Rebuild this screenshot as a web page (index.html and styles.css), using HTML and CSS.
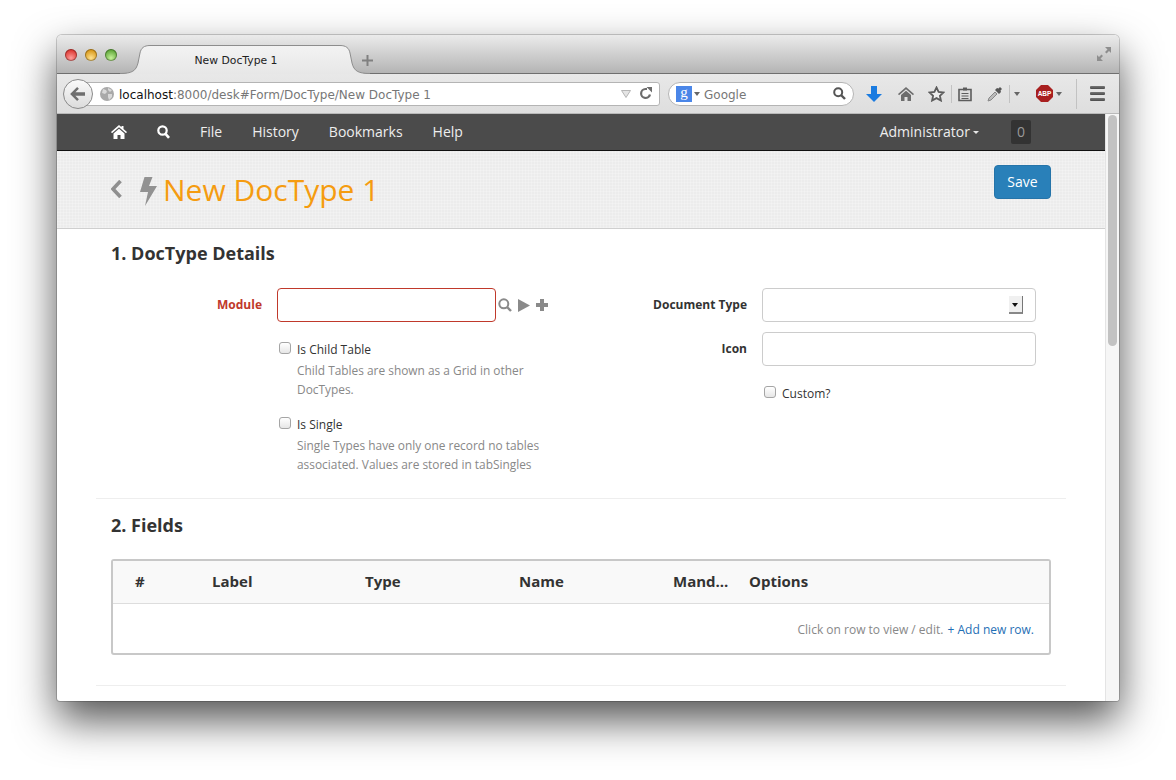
FILE: index.html
```html
<!DOCTYPE html>
<html lang="en">

<head>
    <meta charset="UTF-8">
    <title>New DocType 1</title>
    <link rel="stylesheet" href="styles.css">
</head>

<body>
    <div class="window">
        <div class="titlebar">
            <div class="lights">
                <span class="light red"></span>
                <span class="light amber"></span>
                <span class="light green"></span>
            </div>
            <div class="tab">
                <svg class="tab-shape" width="250" height="29" viewBox="0 0 250 29">
                    <defs>
                        <linearGradient id="tabfill" x1="0" y1="0" x2="0" y2="1">
                            <stop offset="0" stop-color="#f3f3f3" />
                            <stop offset="1" stop-color="#e7e7e7" />
                        </linearGradient>
                    </defs>
                    <path d="M0 28.500C12 28.500 16 26 18 18L20 8C21 3 24 .5 30 .5H220C226 .5 229 3 230 8L232 18C234 26 238 28.500 250 28.500V29H0Z" fill="url(#tabfill)" />
                    <path d="M0 28.500C12 28.500 16 26 18 18L20 8C21 3 24 .5 30 .5H220C226 .5 229 3 230 8L232 18C234 26 238 28.500 250 28.500" fill="none" stroke="#8d8d8d" />
                </svg>
                <span class="tab-title">New DocType 1</span>
            </div>
            <svg class="new-tab" width="11" height="11" viewBox="0 0 11 11">
                <path d="M4.500 0h2v4.500H11v2H6.500V11h-2V6.500H0v-2h4.500z" fill="#808080" />
            </svg>
            <svg class="fullscreen" width="16" height="16" viewBox="0 0 16 16">
                <path d="M9 1h6v6l-2-2-2.500 2.500-1.500-1.500L11.500 3.500zM7 15H1V9l2 2 2.500-2.500L7 10 4.500 12.500z" fill="#8e8e8e" />
            </svg>
        </div>

        <div class="toolbar">
            <div class="back-btn">
                <svg width="16" height="14" viewBox="0 0 18 16">
                    <path d="M8 0l2 2-4 4h11v4H6l4 4-2 2-8-8z" fill="#6e6e6e" />
                </svg>
            </div>
            <div class="urlbar">
                <svg class="globe" width="14" height="14" viewBox="0 0 14 14">
                    <circle cx="7" cy="7" r="7" fill="#a9a9a9" />
                    <path d="M3 2l3 1 1 2-2 2-3-1zM8 7l4 0 0 3-3 3-1-3zM8 1l4 2-2 2-2-2z" fill="#d9d9d9" />
                </svg>
                <span class="url"><b class="host">localhost</b>:8000/desk#Form/DocType/New DocType 1</span>
                <svg width="10" height="8" viewBox="0 0 10 8">
                    <path d="M.5.500h9L5 7.500z" fill="#e4e4e4" stroke="#b5b5b5" />
                </svg>
                <svg class="reload" width="13" height="13" viewBox="0 0 13 13">
                    <path d="M11 7.500A4.500 4.500 0 1 1 6.500 2H8" fill="none" stroke="#6c6c6c" stroke-width="2.200" />
                    <path d="M7.500 0L13 0 13 5.500z" fill="#6c6c6c" />
                </svg>
            </div>
            <div class="searchbar">
                <span class="engine">g</span>
                <span class="caret engine-caret"></span>
                <span class="search-text">Google</span>
                <svg class="search-go" width="13" height="13" viewBox="0 0 13 13">
                    <circle cx="5.200" cy="5.200" r="4" fill="none" stroke="#555" stroke-width="2" />
                    <path d="M8 8l4 4" stroke="#555" stroke-width="2.400" />
                </svg>
            </div>
            <svg class="tool tool-download" width="16" height="16" viewBox="0 0 16 16">
                <path d="M5 0h6v8h5l-8 8-8-8h5z" fill="#1a7be0" />
            </svg>
            <svg class="tool tool-home" width="16" height="16" viewBox="0 0 16 16">
                <path d="M8 1l8 7-1 1.200L8 3.200 1 9.200 0 8z M3 9l5-4.300L13 9v6H9.500v-4h-3v4H3z" fill="#6d6d6d" />
            </svg>
            <svg class="tool tool-star" width="17" height="16" viewBox="0 0 17 16">
                <path d="M8.500 1.500l2.100 4.400 4.900.6-3.600 3.300 1 4.700-4.400-2.400-4.400 2.400 1-4.700L1.500 6.500l4.900-.6z" fill="#eee" stroke="#5c5c5c" stroke-width="1.800" />
            </svg>
            <span class="sep sep-a"></span>
            <svg class="tool tool-clip" width="16" height="16" viewBox="0 0 16 16">
                <path d="M2 3.500h12v11H2z" fill="#ddd" stroke="#5c5c5c" stroke-width="1.600" />
                <path d="M6 1.500h4v3H6zM4.500 7h7v1h-7zM4.500 9.500h7v1h-7zM4.500 12h7v1h-7z" fill="#5c5c5c" />
            </svg>
            <svg class="tool tool-drop" width="16" height="16" viewBox="0 0 16 16">
                <path d="M1 15l1-3 6-6 2 2-6 6z" fill="#bbb" stroke="#888" />
                <path d="M8 4l2-2 1.500.5L13 1l2 2-1.500 1.500L14 6l-2 2z" fill="#555" />
            </svg>
            <span class="sep sep-b"></span>
            <span class="caret caret-b"></span>
            <svg class="tool tool-abp" width="17" height="17" viewBox="0 0 17 17">
                <path d="M5 0h7l5 5v7l-5 5H5l-5-5V5z" fill="#a81f1f" />
                <text x="8.500" y="11" text-anchor="middle" class="abp-text">ABP</text>
            </svg>
            <span class="caret caret-c"></span>
            <span class="sep sep-c"></span>
            <span class="menu-icon"><i></i><i></i><i></i></span>
        </div>

        <div class="viewport">
            <div class="page">
                <nav class="navbar">
                    <a class="nav-item">
                        <svg class="nav-icon" width="16" height="14" viewBox="0 0 16 14">
                            <path d="M8 0l2.500 2.200V1h2v3L16 7l-1 1.200-7-6-7 6L0 7z M2.500 8.500L8 3.800l5.500 4.700V14h-4v-4h-3v4h-4z" fill="#fff" />
                        </svg>
                    </a>
                    <a class="nav-item">
                        <svg class="nav-icon" width="13" height="14" viewBox="0 0 13 14">
                            <circle cx="5.500" cy="5.500" r="4.200" fill="none" stroke="#fff" stroke-width="2.200" />
                            <path d="M8.500 8.800l3.500 4" stroke="#fff" stroke-width="2.600" />
                        </svg>
                    </a>
                    <a class="nav-item nav-text">File</a>
                    <a class="nav-item nav-text">History</a>
                    <a class="nav-item nav-text">Bookmarks</a>
                    <a class="nav-item nav-text">Help</a>
                    <a class="nav-item nav-text nav-user">Administrator<span class="caret user-caret"></span></a>
                    <span class="nav-badge">0</span>
                </nav>

                <header class="page-head">
                    <svg class="head-back" width="13" height="18" viewBox="0 0 13 18">
                        <path d="M9.500 1L2 9l7.500 8" fill="none" stroke="#8f8f8f" stroke-width="3.600" />
                    </svg>
                    <svg class="head-bolt" width="17" height="29" viewBox="0 0 17 29">
                        <path d="M4.500 0h8L9 9h8L5 29l3-14H0z" fill="#929292" />
                    </svg>
                    <h1 class="page-title">New DocType 1</h1>
                    <button class="btn-save">Save</button>
                </header>

                <section class="section section-details">
                    <h2>1. DocType Details</h2>
                    <div class="columns">
                        <div class="column">
                            <div class="field-row">
                                <label class="field-label required">Module</label>
                                <div class="field-body">
                                    <input class="control control-error" type="text">
                                    <svg class="link-icon link-search" width="14" height="14" viewBox="0 0 14 14">
                                        <circle cx="5.800" cy="5.800" r="4.500" fill="none" stroke="#8a8a8a" stroke-width="2" />
                                        <path d="M9 9l4 4" stroke="#8a8a8a" stroke-width="2.400" />
                                    </svg>
                                    <svg class="link-icon" width="12" height="13" viewBox="0 0 12 13">
                                        <path d="M0 0l12 6.500L0 13z" fill="#8a8a8a" />
                                    </svg>
                                    <svg class="link-icon" width="12" height="12" viewBox="0 0 12 12">
                                        <path d="M4 0h4v4h4v4H8v4H4V8H0V4h4z" fill="#8a8a8a" />
                                    </svg>
                                </div>
                            </div>
                            <div class="check-group check-first">
                                <label class="check"><input type="checkbox">Is Child Table</label>
                                <p class="help">Child Tables are shown as a Grid in other DocTypes.</p>
                            </div>
                            <div class="check-group">
                                <label class="check"><input type="checkbox">Is Single</label>
                                <p class="help">Single Types have only one record no tables associated. Values are stored in tabSingles</p>
                            </div>
                        </div>
                        <div class="column">
                            <div class="field-row">
                                <label class="field-label">Document Type</label>
                                <div class="field-body select-wrap">
                                    <input class="control control-wide" type="text">
                                    <span class="select-arrow"></span>
                                </div>
                            </div>
                            <div class="field-row">
                                <label class="field-label">Icon</label>
                                <div class="field-body">
                                    <input class="control control-wide" type="text">
                                </div>
                            </div>
                            <div class="check-group check-custom">
                                <label class="check"><input type="checkbox">Custom?</label>
                            </div>
                        </div>
                    </div>
                </section>

                <section class="section section-fields">
                    <h2>2. Fields</h2>
                    <div class="grid">
                        <div class="grid-head">
                            <span>#</span>
                            <span>Label</span>
                            <span>Type</span>
                            <span>Name</span>
                            <span>Mand...</span>
                            <span>Options</span>
                        </div>
                        <div class="grid-foot">
                            Click on row to view / edit.
                            <a class="add-row">+ Add new row.</a>
                        </div>
                    </div>
                </section>
            </div>
            <div class="scrollbar">
                <div class="thumb"></div>
            </div>
        </div>
    </div>
</body>

</html>
```

FILE: styles.css
```css
html,
body {
    height: 100%;
}

body {
    margin: 0;
    padding: 35px 57px 0;
    box-sizing: border-box;
    background-color: #fff;
    overflow: hidden;
    font-family: "Open Sans", sans-serif;
    color: #333;
}

.window {
    width: 1062px;
    height: 666px;
    display: flex;
    flex-direction: column;
    border-radius: 5px 5px 3px 3px;
    overflow: hidden;
    background-color: #fff;
    box-shadow: 0 19px 42px rgba(0, 0, 0, 0.68), 0 0 0 1px rgba(70, 70, 70, 0.25);
}

/* title bar */

.titlebar {
    height: 38px;
    flex: none;
    display: flex;
    align-items: flex-end;
    position: relative;
    background: linear-gradient(#ebebeb, #b4b4b4);
    border-bottom: 1px solid #6f6f6f;
}

.lights {
    display: flex;
    gap: 8px;
    position: absolute;
    left: 8px;
    top: 14px;
}

.light {
    width: 12px;
    height: 12px;
    border-radius: 50%;
    box-shadow: inset 0 0 0 1px rgba(0, 0, 0, 0.3);
}

.red {
    background: radial-gradient(circle at 50% 75%, #ff9d9a, #dd3a35 70%);
}

.amber {
    background: radial-gradient(circle at 50% 75%, #ffe28f, #d99a1c 70%);
}

.green {
    background: radial-gradient(circle at 50% 75%, #c6f29a, #62a93c 70%);
}

.tab {
    width: 250px;
    height: 29px;
    box-sizing: border-box;
    margin-left: 63px;
    margin-bottom: -1px;
    padding: 2px 18px 0 0;
    position: relative;
    display: flex;
    align-items: center;
    justify-content: center;
}

.tab-shape {
    position: absolute;
    left: 0;
    top: 0;
}

.tab-title {
    position: relative;
    font-family: "DejaVu Sans", sans-serif;
    font-size: 10.800px;
    color: #222;
}

.new-tab {
    margin: 0 0 7px -8px;
    position: relative;
}

.fullscreen {
    position: absolute;
    right: 7px;
    top: 11px;
}

/* toolbar */

.toolbar {
    height: 40px;
    flex: none;
    box-sizing: border-box;
    display: flex;
    align-items: center;
    padding-left: 6px;
    background: linear-gradient(#e8e8e8, #dedede);
    border-bottom: 1px solid #b9b9b9;
}

.back-btn {
    width: 30px;
    height: 30px;
    box-sizing: border-box;
    border: 1px solid #8a8a8a;
    border-radius: 50%;
    background: linear-gradient(#fafafa, #dcdcdc);
    display: flex;
    align-items: center;
    justify-content: center;
    position: relative;
    z-index: 1;
}

.urlbar,
.searchbar {
    height: 24px;
    box-sizing: border-box;
    display: flex;
    align-items: center;
    border: 1px solid #b4b4b4;
    background-color: #fff;
    font-family: "DejaVu Sans", sans-serif;
    font-size: 12px;
}

.urlbar {
    width: 579px;
    margin-left: -12px;
    padding: 0 7px 0 18px;
    border-radius: 3px;
}

.url,
.search-text {
    padding-top: 2px;
}

.globe {
    margin-right: 5px;
}

.url {
    flex: 1;
    color: #777;
    white-space: nowrap;
}

.host {
    font-weight: normal;
    color: #111;
}

.reload {
    margin-left: 8px;
}

.searchbar {
    width: 186px;
    margin-left: 8px;
    padding: 0 7px;
    border-radius: 12px;
}

.engine {
    width: 16px;
    height: 16px;
    background-color: #4a86e8;
    color: #fff;
    font-family: "Liberation Serif", serif;
    font-size: 15px;
    line-height: 13px;
    text-align: center;
}

.caret {
    width: 0;
    height: 0;
    flex: none;
    border-left: 3.500px solid transparent;
    border-right: 3.500px solid transparent;
    border-top: 4px solid #666;
}

.engine-caret {
    margin-left: 2px;
}

.search-text {
    flex: 1;
    margin-left: 4px;
    color: #777;
}

.tool {
    flex: none;
}

.sep {
    width: 1px;
    flex: none;
    background-color: #c2c2c2;
}

.tool-download {
    margin-left: 12px;
}

.tool-home {
    margin-left: 16px;
}

.tool-star {
    margin-left: 14px;
}

.sep-a {
    height: 18px;
    margin-left: 6px;
}

.tool-clip {
    margin-left: 5px;
}

.tool-drop {
    margin-left: 14px;
}

.sep-b {
    height: 18px;
    margin-left: 6px;
}

.caret-b {
    margin-left: 4px;
}

.tool-abp {
    margin-left: 16px;
}

.abp-text {
    font-family: "Liberation Sans", sans-serif;
    font-size: 6.500px;
    font-weight: bold;
    fill: #fff;
}

.caret-c {
    margin-left: 3px;
}

.sep-c {
    height: 30px;
    margin-left: 14px;
}

.menu-icon {
    width: 15px;
    margin-left: 13px;
    display: flex;
    flex-direction: column;
    gap: 3px;
}

.menu-icon i {
    height: 3px;
    background: linear-gradient(#777, #4a4a4a);
    border-radius: 1px;
}

/* page */

.viewport {
    flex: 1;
    display: flex;
    min-height: 0;
}

.page {
    flex: 1;
    min-width: 0;
    overflow: hidden;
}

.scrollbar {
    width: 14px;
    flex: none;
    box-sizing: border-box;
    padding: 1px 2px;
    background-color: #f6f6f6;
    border-left: 1px solid #e4e4e4;
}

.thumb {
    height: 231px;
    border-radius: 5px;
    background-color: #c2c2c2;
}

.navbar {
    height: 36px;
    display: flex;
    align-items: center;
    padding-left: 39px;
    background-color: #4b4b4b;
    border-bottom: 1px solid #111;
    font-size: 14px;
}

.nav-item {
    padding: 0 15px;
    color: #eee;
    display: flex;
    align-items: center;
}

.nav-text {
    padding-bottom: 2px;
}

.nav-user {
    margin-left: auto;
    margin-right: 3px;
}

.user-caret {
    margin: 2px 0 0 3px;
    border-top-color: #e6e6e6;
    border-top-width: 3px;
}

.nav-badge {
    width: 20px;
    height: 24px;
    margin: 0 74px 0 14px;
    border-radius: 2px;
    background-color: #333;
    color: #999;
    text-align: center;
    line-height: 24px;
}

.page-head {
    height: 77px;
    display: flex;
    align-items: flex-start;
    padding: 0 54px;
    border-bottom: 1px solid #cfcfcf;
    background-color: #ececec;
    background-image: repeating-linear-gradient(0deg, rgba(255, 255, 255, 0.22) 0 1px, transparent 1px 3px), repeating-linear-gradient(90deg, rgba(255, 255, 255, 0.22) 0 1px, transparent 1px 3px);
}

.head-back {
    margin-top: 29px;
}

.head-bolt {
    margin: 26px 0 0 16px;
}

.page-title {
    flex: 1;
    margin: 19px 0 0 6px;
    font-size: 30px;
    font-weight: normal;
    line-height: 40px;
    color: #f59c10;
}

.btn-save {
    width: 57px;
    height: 34px;
    margin-top: 14px;
    padding: 0 0 2px;
    font-family: "Open Sans", sans-serif;
    font-size: 14px;
    color: #fff;
    background-color: #2980b9;
    border: 1px solid #2574a9;
    border-radius: 4px;
}

.section {
    margin: 0 39px;
    padding: 0 15px;
    border-bottom: 1px solid #eee;
}

.section h2 {
    margin: 0 0 21px;
    font-size: 18px;
    line-height: 26px;
    font-weight: bold;
    color: #333;
}

.section-details {
    padding-top: 11px;
    padding-bottom: 24px;
}

.section-details h2 {
    margin-bottom: 22px;
}

.section-fields {
    padding-top: 13px;
    padding-bottom: 30px;
}

.columns {
    display: flex;
}

.column {
    width: 485px;
    flex: none;
}

.field-row {
    display: flex;
    align-items: center;
    gap: 15px;
    margin-bottom: 10px;
}

.field-label {
    width: 151px;
    flex: none;
    padding-bottom: 2px;
    text-align: right;
    font-size: 12px;
    font-weight: bold;
}

.required {
    color: #c0392b;
}

.field-body {
    display: flex;
    align-items: center;
    gap: 6px;
}

.control {
    width: 219px;
    height: 34px;
    box-sizing: border-box;
    margin: 0;
    padding: 6px 12px;
    background-color: #fff;
    border: 1px solid #ccc;
    border-radius: 4px;
}

.control-error {
    border-color: #c0392b;
}

.control-wide {
    width: 274px;
}

.link-icon {
    flex: none;
}

.link-search {
    margin-left: -4px;
}

.select-wrap {
    position: relative;
}

.select-arrow {
    position: absolute;
    left: 247px;
    top: 8px;
    width: 14px;
    height: 18px;
    box-sizing: border-box;
    background-color: #f0f0f0;
    border-right: 1px solid #777;
    border-bottom: 2px solid #888;
}

.select-arrow::after {
    content: "";
    position: absolute;
    left: 3px;
    top: 7px;
    border-left: 3px solid transparent;
    border-right: 3px solid transparent;
    border-top: 4px solid #111;
}

.check-group {
    margin: 0 0 15px 166px;
    font-size: 12px;
}

.check-first {
    margin-top: 17px;
}

.check {
    display: flex;
    align-items: center;
    height: 20px;
    color: #333;
}

.check input {
    appearance: none;
    width: 12px;
    height: 12px;
    margin: -3px 6px 0 2px;
    border: 1px solid #a5a5a5;
    border-radius: 3px;
    background: linear-gradient(#fff, #e6e6e6);
}

.help {
    width: 250px;
    margin: 2px 0 0 20px;
    font-size: 11.900px;
    line-height: 19px;
    color: #888;
}

.check-group:last-child {
    margin-bottom: 0;
}

.check-custom {
    margin-top: 17px;
}

.grid {
    height: 96px;
    box-sizing: border-box;
    border: 2px solid #c8c8c8;
    border-radius: 3px;
}

.grid-head {
    height: 43px;
    box-sizing: border-box;
    display: grid;
    grid-template-columns: 77px 153px 154px 154px 76px 1fr;
    align-items: center;
    padding: 0 0 3px 22px;
    background-color: #f9f9f9;
    border-bottom: 1px solid #ddd;
    font-size: 15px;
    font-weight: bold;
}

.grid-foot {
    padding: 16px 15px 0 0;
    text-align: right;
    font-size: 12px;
    line-height: 19px;
    color: #888;
}

.add-row {
    margin-left: 1px;
    color: #1f6fb5;
}
```
